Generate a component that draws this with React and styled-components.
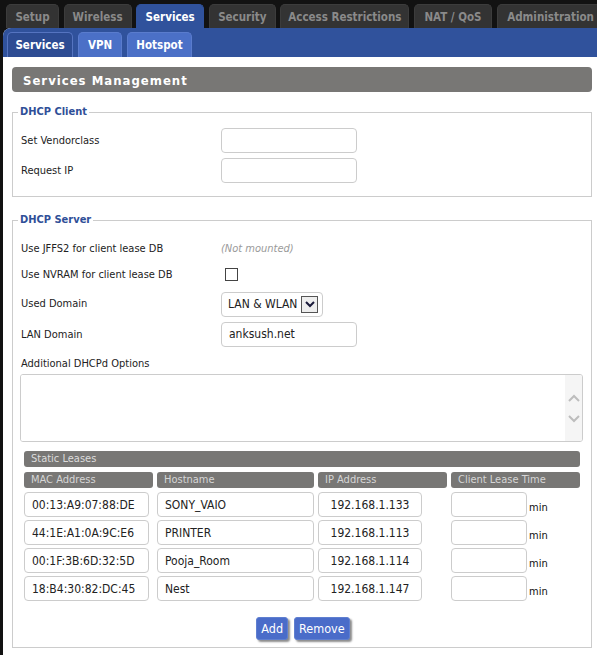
import React from 'react';
import styled, { createGlobalStyle } from 'styled-components';

const GlobalStyle = createGlobalStyle`
  html, body {
    margin: 0;
    padding: 0;
    background: #121212;
    overflow: hidden;
    font-family: "DejaVu Sans Condensed", "Liberation Sans", sans-serif;
  }
`;

const Page = styled.div`
  width: 597px;
  height: 655px;
  overflow: hidden;
`;

const TopTabs = styled.div`
  display: flex;
  gap: 4.6px;
  padding: 4px 0 0 6px;
  height: 24px;
  white-space: nowrap;
`;

const TopTab = styled.div`
  flex-shrink: 0;
  width: ${(p) => p.w}px;
  height: 24px;
  box-sizing: border-box;
  border-radius: 5px 5px 0 0;
  border: 1px solid ${(p) => (p.active ? '#30529c' : '#3c3c3c')};
  border-bottom: none;
  background: ${(p) => (p.active ? '#30529c' : '#333333')};
  color: ${(p) => (p.active ? '#ffffff' : '#8a8a8a')};
  font-size: 11.5px;
  font-weight: bold;
  line-height: 25px;
  text-align: center;
`;

const Panel = styled.div`
  margin-left: 3px;
  background: #ffffff;
  height: 627px;
  border-top-left-radius: 8px;
  overflow: hidden;
`;

const SubBar = styled.div`
  display: flex;
  gap: 5px;
  height: 29px;
  box-sizing: border-box;
  padding: 4px 0 0 4px;
  background: #30529c;
`;

const SubTab = styled.div`
  width: ${(p) => p.w}px;
  height: 25px;
  box-sizing: border-box;
  border-radius: 5px 5px 0 0;
  border: 1px solid ${(p) => (p.active ? '#5574c0' : '#5a7ccd')};
  border-bottom: none;
  background: ${(p) => (p.active ? '#2d4c93' : '#4b70c7')};
  color: #ffffff;
  font-size: 11.5px;
  font-weight: bold;
  line-height: 24px;
  text-align: center;
`;

const Content = styled.div`
  padding: 10px 5px 0 9px;
`;

const SectionTitle = styled.h2`
  margin: 0;
  height: 25px;
  border-radius: 4px;
  background: #787775;
  color: #ffffff;
  font-size: 13px;
  font-weight: bold;
  letter-spacing: 1px;
  line-height: 27px;
  padding-left: 11px;
`;

const Fieldset = styled.fieldset`
  margin: ${(p) => p.top}px 0 0 0;
  padding: ${(p) => p.pt}px 8px ${(p) => p.bottom}px 8px;
  border: 1px solid #cccccc;
  min-width: 0;
`;

const Legend = styled.legend`
  margin-left: -3px;
  padding: 0 2px;
  color: #2f4f98;
  font-size: 11px;
  font-weight: bold;
  line-height: 14px;
`;

const Row = styled.div`
  display: flex;
  align-items: center;
  box-sizing: border-box;
  height: ${(p) => p.h}px;
  padding-top: ${(p) => p.pad || 0}px;
`;

const Label = styled.div`
  width: 200px;
  flex-shrink: 0;
  color: #222222;
  font-size: 11px;
`;

const TextInput = styled.input`
  box-sizing: border-box;
  width: ${(p) => p.w}px;
  height: 25px;
  margin: 0;
  padding: 0 ${(p) => (p.center ? 0 : 7)}px;
  border: 1px solid #cccccc;
  border-radius: 4px;
  background: #ffffff;
  color: #222222;
  font-family: inherit;
  font-size: 12px;
  text-align: ${(p) => (p.center ? 'center' : 'left')};
  outline: none;
`;

const Muted = styled.span`
  color: #9a9a9a;
  font-size: 11px;
  font-style: italic;
`;

const Check = styled.input`
  appearance: none;
  box-sizing: border-box;
  width: 13px;
  height: 13px;
  margin: 0 0 0 4px;
  border: 1px solid #444444;
  background: #ffffff;
`;

const SelectBox = styled.div`
  box-sizing: border-box;
  display: flex;
  align-items: center;
  width: 102px;
  height: 25px;
  padding: 0 4px 0 6px;
  border: 1px solid #cccccc;
  border-radius: 4px;
  color: #222222;
  font-size: 12px;
  margin-top: 2px;
`;

const SelectText = styled.span`
  flex: 1;
`;

const SelectArrow = styled.span`
  display: flex;
  align-items: center;
  justify-content: center;
  box-sizing: border-box;
  width: 17px;
  height: 17px;
  border: 1px solid #555555;
  background: #eeeeee;
`;

const TextBox = styled.div`
  display: flex;
  box-sizing: border-box;
  width: 563px;
  height: 68px;
  margin-left: -1px;
  border: 1px solid #cccccc;
  border-radius: 3px;
  overflow: hidden;
`;

const Area = styled.textarea`
  flex: 1;
  border: none;
  resize: none;
  outline: none;
  margin: 0;
  padding: 4px;
  font-family: inherit;
`;

const ScrollStrip = styled.div`
  width: 17px;
  background: #f5f5f5;
  display: flex;
  flex-direction: column;
  align-items: center;
  justify-content: center;
  gap: 13px;
`;

const Table = styled.div`
  margin: 9px 3px 0 3px;
`;

const TableBar = styled.div`
  height: 16px;
  border-radius: 3px;
  background: #787775;
  color: #dcdcdc;
  font-size: 11px;
  line-height: 16px;
  padding-left: 7px;
`;

const Cols = styled.div`
  display: grid;
  grid-template-columns: 129px 157px 129px 129px;
  column-gap: 4px;
  margin-top: ${(p) => p.gap}px;
`;

const ColHead = styled.div`
  height: 16px;
  border-radius: 3px;
  background: #787775;
  color: #d6d6d6;
  font-size: 11px;
  line-height: 16px;
  padding-left: 7px;
`;

const Cell = styled.div`
  display: flex;
  align-items: flex-end;
`;

const Unit = styled.span`
  margin-left: 2px;
  padding-bottom: 3px;
  color: #111111;
  font-size: 11px;
  line-height: 13px;
`;

const Buttons = styled.div`
  display: flex;
  justify-content: center;
  gap: 6px;
  margin-top: 16px;
  padding-left: 2px;
`;

const Button = styled.button`
  height: 23px;
  margin: 0;
  padding: 0 4px;
  border: 1px solid #5f7fd0;
  border-radius: 3px;
  background: #4a6cc9;
  color: #ffffff;
  font-family: inherit;
  font-size: 12.5px;
  box-shadow: 2px 2px 2px rgba(0, 0, 0, 0.45);
`;

const Chevron = ({ up }) => (
  <svg width="12" height="8" viewBox="0 0 12 8">
    <path
      d={up ? 'M1 7 L6 2 L11 7' : 'M1 1 L6 6 L11 1'}
      fill="none"
      stroke="#bdbdbd"
      strokeWidth="2"
    />
  </svg>
);

const topTabs = [
  ['Setup', 53],
  ['Wireless', 68],
  ['Services', 68, true],
  ['Security', 67],
  ['Access Restrictions', 129],
  ['NAT / QoS', 78],
  ['Administration', 108],
];

const leases = [
  ['00:13:A9:07:88:DE', 'SONY_VAIO', '192.168.1.133'],
  ['44:1E:A1:0A:9C:E6', 'PRINTER', '192.168.1.113'],
  ['00:1F:3B:6D:32:5D', 'Pooja_Room', '192.168.1.114'],
  ['18:B4:30:82:DC:45', 'Nest', '192.168.1.147'],
];

export default function App() {
  return (
    <Page>
      <GlobalStyle />
      <TopTabs>
        {topTabs.map(([name, w, active]) => (
          <TopTab key={name} w={w} active={active}>
            {name}
          </TopTab>
        ))}
      </TopTabs>
      <Panel>
        <SubBar>
          <SubTab w={66} active>Services</SubTab>
          <SubTab w={44}>VPN</SubTab>
          <SubTab w={65}>Hotspot</SubTab>
        </SubBar>
        <Content>
          <SectionTitle>Services Management</SectionTitle>

          <Fieldset top={13} pt={6} bottom={11}>
            <Legend>DHCP Client</Legend>
            <Row h={30}>
              <Label>Set Vendorclass</Label>
              <TextInput w={136} />
            </Row>
            <Row h={30}>
              <Label>Request IP</Label>
              <TextInput w={136} />
            </Row>
          </Fieldset>

          <Fieldset top={16} pt={8} bottom={7}>
            <Legend>DHCP Server</Legend>
            <Row h={26}>
              <Label>Use JFFS2 for client lease DB</Label>
              <Muted>(Not mounted)</Muted>
            </Row>
            <Row h={26}>
              <Label>Use NVRAM for client lease DB</Label>
              <Check type="checkbox" />
            </Row>
            <Row h={32}>
              <Label>Used Domain</Label>
              <SelectBox>
                <SelectText>LAN &amp; WLAN</SelectText>
                <SelectArrow>
                  <svg width="10" height="7" viewBox="0 0 10 7">
                    <path d="M1 1 L5 5 L9 1" fill="none" stroke="#1a1a3a" strokeWidth="2" />
                  </svg>
                </SelectArrow>
              </SelectBox>
            </Row>
            <Row h={30}>
              <Label>LAN Domain</Label>
              <TextInput w={136} defaultValue="anksush.net" />
            </Row>
            <Row h={25} pad={3}>
              <Label>Additional DHCPd Options</Label>
            </Row>
            <TextBox>
              <Area />
              <ScrollStrip>
                <Chevron up />
                <Chevron />
              </ScrollStrip>
            </TextBox>

            <Table>
              <TableBar>Static Leases</TableBar>
              <Cols gap={5}>
                <ColHead>MAC Address</ColHead>
                <ColHead>Hostname</ColHead>
                <ColHead>IP Address</ColHead>
                <ColHead>Client Lease Time</ColHead>
              </Cols>
              {leases.map(([mac, host, ip], i) => (
                <Cols key={mac} gap={i === 0 ? 4 : 3}>
                  <Cell>
                    <TextInput w={125} defaultValue={mac} />
                  </Cell>
                  <Cell>
                    <TextInput w={157} defaultValue={host} />
                  </Cell>
                  <Cell>
                    <TextInput w={104} center defaultValue={ip} />
                  </Cell>
                  <Cell>
                    <TextInput w={76} />
                    <Unit>min</Unit>
                  </Cell>
                </Cols>
              ))}
            </Table>

            <Buttons>
              <Button>Add</Button>
              <Button>Remove</Button>
            </Buttons>
          </Fieldset>
        </Content>
      </Panel>
    </Page>
  );
}
